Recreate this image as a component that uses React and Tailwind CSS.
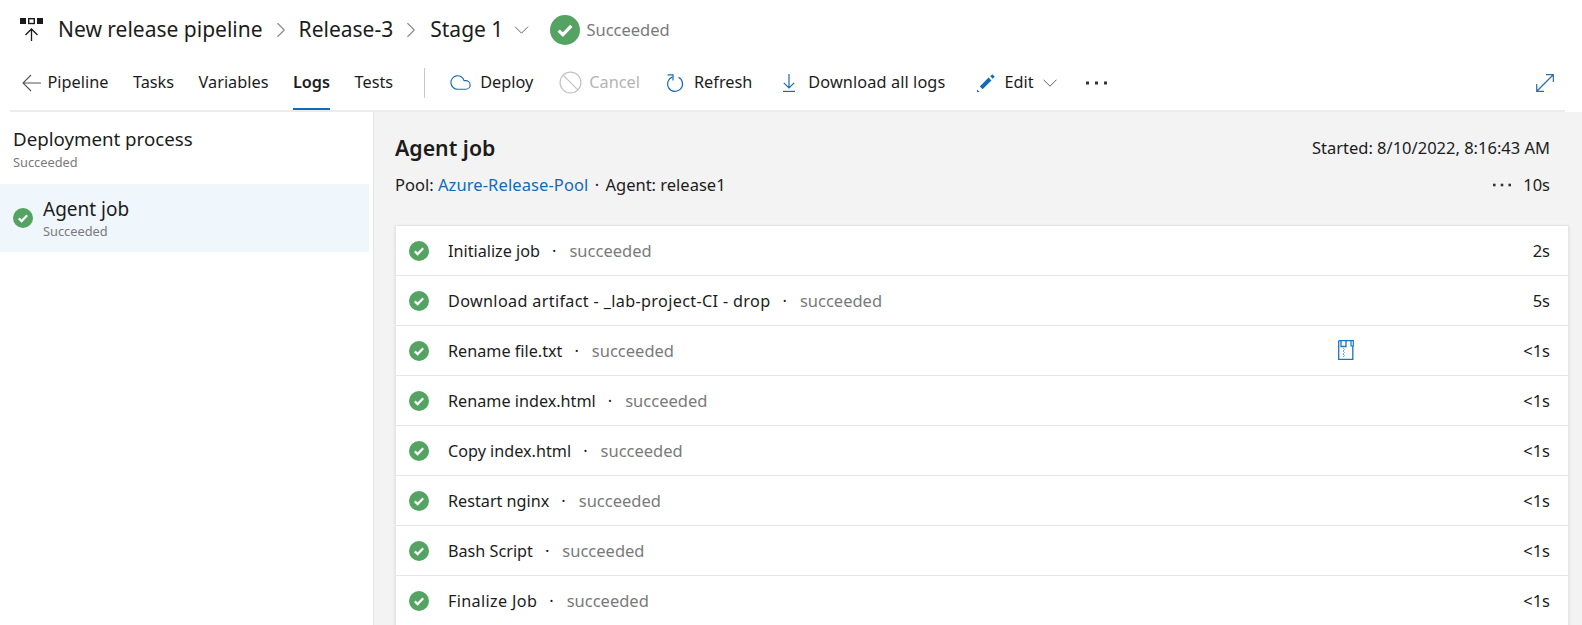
import { ChevronRight, Cloud, Ban } from 'lucide-react';

const steps = [
  { name: 'Initialize job', time: '2s' },
  { name: 'Download artifact - _lab-project-CI - drop', time: '5s', wide: true },
  { name: 'Rename file.txt', time: '<1s', zip: true },
  { name: 'Rename index.html', time: '<1s' },
  { name: 'Copy index.html', time: '<1s' },
  { name: 'Restart nginx', time: '<1s' },
  { name: 'Bash Script', time: '<1s' },
  { name: 'Finalize Job', time: '<1s', wide: true },
];

const CheckCircle = ({ className }) => (
  <svg className={className} viewBox="0 0 20 20">
    <circle cx="10" cy="10" r="10" fill="#55a362" />
    <path d="M5.8 10.4l2.8 2.7 5.6-5.8" fill="none" stroke="#fff" strokeWidth="2.2" />
  </svg>
);

const PipelineIcon = () => (
  <svg className="w-[24px] h-[24px]" viewBox="0 0 24 24">
    <rect x="0" y="0" width="6" height="6" fill="#1a1a1a" />
    <rect x="8.7" y="0.7" width="5.6" height="4.8" fill="none" stroke="#1a1a1a" strokeWidth="1.4" />
    <rect x="17" y="0" width="6" height="6" fill="#1a1a1a" />
    <path d="M11.5 23V11.5M5.5 17l6-6 6 6" fill="none" stroke="#1a1a1a" strokeWidth="1.3" />
  </svg>
);

const ZipIcon = () => (
  <svg className="w-[16px] h-[20px] -translate-y-[1px]" viewBox="0 0 16 20">
    <path d="M.7.7h12.3M.7.7v18.6h14.1V6" fill="none" stroke="#1b74c5" strokeWidth="1.3" />
    <path d="M3 1v5.5h5V1" fill="none" stroke="#1b74c5" strokeWidth="1.3" />
    <path d="M13 .7h2.3V6H13z" fill="none" stroke="#1b74c5" strokeWidth="1.2" />
    <path d="M5 8l1.5 1.5L5 11l1.5 1.5L5 14l1.5 1.5L5 17" fill="none" stroke="#6fa8dc" strokeWidth="1" />
  </svg>
);

const ArrowBack = () => (
  <svg className="w-[19px] h-[18px] ml-[12px]" viewBox="0 0 19 18">
    <path d="M19 9H1M9 1L1 9l8 8" fill="none" stroke="#555" strokeWidth="1.1" />
  </svg>
);

const RefreshIcon = () => (
  <svg className="w-[20px] h-[20px] ml-[25px]" viewBox="0 0 20 20">
    <path d="M7.5 3.9a7.5 7.5 0 1 0 6 .4" fill="none" stroke="#1b6bb0" strokeWidth="1.2" />
    <path d="M2.5 1.8H8V7.5" fill="none" stroke="#1b6bb0" strokeWidth="1.2" />
  </svg>
);

const DownloadIcon = () => (
  <svg className="w-[12px] h-[18px] ml-[31px]" viewBox="0 0 12 18">
    <path d="M6 0v14M.8 8.8L6 14l5.2-5.2" fill="none" stroke="#1b6bb0" strokeWidth="1.2" />
    <path d="M0 17.4h12" fill="none" stroke="#1b6bb0" strokeWidth="1.2" />
  </svg>
);

const PencilIcon = () => (
  <svg className="w-[18px] h-[18px] ml-[32px]" viewBox="0 0 18 18">
    <path d="M4.2 13.8L13 5" fill="none" stroke="#0f6cbd" strokeWidth="4" />
    <path d="M14.5 3.5l2-2" fill="none" stroke="#0f6cbd" strokeWidth="3.4" />
    <path d="M0 18v-2.6L2.6 18z" fill="#0f6cbd" />
  </svg>
);

const ChevronDownThin = ({ className }) => (
  <svg className={className} viewBox="0 0 14 8">
    <path d="M.5.7L7 7.2 13.5.7" fill="none" stroke="#666" strokeWidth="1" />
  </svg>
);

const Dots = ({ className }) => (
  <svg className={className} viewBox="0 0 21 4">
    <rect x="0" y="0.5" width="3" height="3" fill="#333" />
    <rect x="9" y="0.5" width="3" height="3" fill="#333" />
    <rect x="18" y="0.5" width="3" height="3" fill="#333" />
  </svg>
);

const ExpandIcon = () => (
  <svg className="w-[18px] h-[18px] ml-auto mr-[11px]" viewBox="0 0 18 18">
    <path d="M1 17L17 1M10 .7h7.3V8M.7 10v7.3H8" fill="none" stroke="#2b6ea6" strokeWidth="1.2" />
  </svg>
);

const Tab = ({ children, active }) => (
  <div className={`h-[48px] pb-[5px] flex items-center border-b-2 ${active ? 'font-semibold border-[#0f6cbd]' : 'border-transparent'}`}>
    {children}
  </div>
);

export default function App() {
  return (
    <div className="h-[625px] w-[1582px] overflow-hidden bg-white text-[#1c1c1c] font-['Noto_Sans',sans-serif]">
      {/* Title */}
      <div className="h-[62px] pb-[2px] pl-[20px] flex items-center text-[21px]">
        <PipelineIcon />
        <span className="ml-[14px]">New release pipeline</span>
        <ChevronRight className="w-[26px] h-[26px] mx-[5px] text-[#8a8a8a]" strokeWidth={1} />
        <span>Release-3</span>
        <ChevronRight className="w-[26px] h-[26px] ml-[5px] mr-[6px] text-[#8a8a8a]" strokeWidth={1} />
        <span>Stage 1</span>
        <ChevronDownThin className="w-[15px] h-[8px] ml-[11px]" />
        <CheckCircle className="w-[30px] h-[30px] ml-[21px]" />
        <span className="ml-[6px] text-[16.5px] text-[#7a7a7a]">Succeeded</span>
      </div>

      {/* Toolbar */}
      <div className="ml-[10px] mr-[17px] h-[50px] border-b-2 border-[#ececec] flex text-[16.3px]">
        <div className="h-[41px] flex items-center">
          <ArrowBack />
        </div>
        <div className="ml-[6.5px] flex gap-[24.5px]">
          <Tab>Pipeline</Tab>
          <Tab>Tasks</Tab>
          <Tab>Variables</Tab>
          <Tab active>Logs</Tab>
          <Tab>Tests</Tab>
        </div>
        <div className="flex-1 h-[41px] flex items-center">
          <div className="w-px h-[30px] bg-[#c8c8c8] ml-[31px]" />
          <Cloud className="w-[23px] h-[23px] ml-[24px] text-[#1b6bb0]" strokeWidth={1.2} />
          <span className="ml-[8px]">Deploy</span>
          <Ban className="w-[25px] h-[25px] ml-[25px] text-[#c4c4c4]" strokeWidth={1.2} />
          <span className="ml-[6px] text-[#b4b4b4]">Cancel</span>
          <RefreshIcon />
          <span className="ml-[9px]">Refresh</span>
          <DownloadIcon />
          <span className="ml-[13px] tracking-[0.1px]">Download all logs</span>
          <PencilIcon />
          <span className="ml-[9px]">Edit</span>
          <ChevronDownThin className="w-[14px] h-[8px] ml-[9px]" />
          <Dots className="w-[21px] h-[4px] ml-[29px]" />
          <ExpandIcon />
        </div>
      </div>

      <div className="flex h-[513px]">
        {/* Left panel */}
        <div className="w-[373px] pt-[15px] shrink-0">
          <div className="pl-[13px] h-[57px]">
            <div className="text-[18.7px] leading-[24px]">Deployment process</div>
            <div className="text-[12.8px] leading-[18px] mt-[2px] text-[#7a7a7a]">Succeeded</div>
          </div>
          <div className="w-[369px] h-[68px] bg-[#eff6fc] flex items-center pl-[13px]">
            <CheckCircle className="w-[20px] h-[20px]" />
            <div className="ml-[10px] pt-[1px]">
              <div className="text-[19px] leading-[24px]">Agent job</div>
              <div className="text-[12.8px] leading-[18px] mt-[1px] text-[#7a7a7a]">Succeeded</div>
            </div>
          </div>
        </div>

        {/* Main */}
        <div className="flex-1 bg-[#f3f3f3] border-l border-[#e6e6e6] pl-[21px] pr-[13px]">
          <div className="h-[113px] pt-[22px] pr-[19px] text-[16.5px]">
            <div className="flex justify-between items-center h-[28px]">
              <span className="text-[21.3px] font-semibold">Agent job</span>
              <span>Started: 8/10/2022, 8:16:43 AM</span>
            </div>
            <div className="flex justify-between items-center mt-[11px] h-[24px]">
              <span>
                Pool: <span className="text-[#0f6cbd] tracking-[0.1px]">Azure-Release-Pool</span>
                <span className="mx-[2px]"> · </span>Agent: release1
              </span>
              <span className="flex items-center">
                <Dots className="w-[18px] h-[4px] mr-[12px]" />
                10s
              </span>
            </div>
          </div>
          <div className="bg-white border-t border-x border-[#e6e6e6] shadow-sm">
            {steps.map((step) => (
              <div key={step.name} className="h-[50px] border-b border-[#e6e6e6] flex items-center pl-[13px] pr-[18px] text-[16.5px]">
                <CheckCircle className="w-[20px] h-[20px]" />
                <span className={`ml-[19px] pt-[2px] text-[16.2px] ${step.wide ? 'tracking-[0.34px]' : ''}`}>{step.name}</span>
                <span className="mx-[12px] pt-[2px]">·</span>
                <span className="text-[#7a7a7a] ml-[1px] pt-[2px]">succeeded</span>
                <div className="flex-1" />
                {step.zip && <ZipIcon />}
                <span className={`text-right pt-[2px] ${step.zip ? 'w-[196px]' : ''}`}>{step.time}</span>
              </div>
            ))}
          </div>
        </div>
      </div>
    </div>
  );
}
